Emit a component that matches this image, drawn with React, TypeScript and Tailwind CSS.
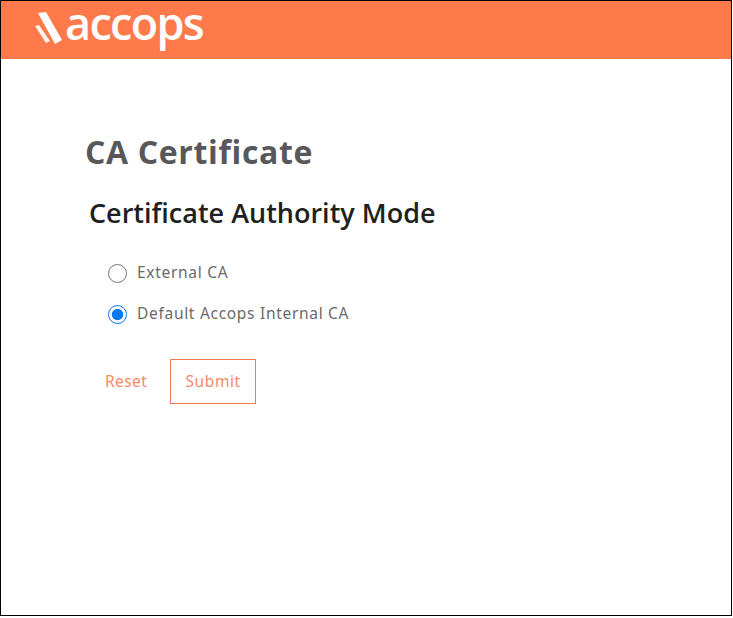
export default function App() {
  return (
    <div className="w-[733px] h-[618px] bg-white overflow-hidden">
      <div className="w-[732px] h-[616px] border border-black flex flex-col">
        <header className="h-[58px] bg-[#ff7a4a] flex items-start pl-[33px] shrink-0">
          <svg width="30" height="34" viewBox="0 0 30 34" className="mt-[11px] shrink-0">
            <polygon points="4,1 12,0 28,28 21,32" fill="#fff" />
            <polygon points="1,14 5,13 16,29 12,31" fill="#fff" opacity="0.9" />
          </svg>
          <span className="ml-[1px] text-[45px] leading-[44px] text-white font-['Open_Sans',sans-serif] font-semibold tracking-[-1.7px]">accops</span>
        </header>
        <main className="flex flex-col pl-[84px] pt-[71px] font-['Open_Sans',sans-serif]">
          <h1 className="text-[32px] leading-[44px] font-bold text-[#58585a] tracking-[0.65px]">CA Certificate</h1>
          <h2 className="mt-[20px] ml-[4px] text-[27px] leading-[37px] font-semibold text-[#221f20]">Certificate Authority Mode</h2>
          <div className="mt-[32px] ml-[23px] flex flex-col gap-[21px]">
            <label className="flex items-center gap-[10px] h-[20px] text-[15.5px] text-[#6a6a6a] tracking-[0.7px] font-['Noto_Sans',sans-serif]">
              <input type="radio" name="ca" className="w-[19px] h-[19px] m-0 accent-[#0a78f0]" />
              External CA
            </label>
            <label className="flex items-center gap-[10px] h-[20px] text-[15.5px] text-[#6a6a6a] tracking-[0.7px] font-['Noto_Sans',sans-serif]">
              <input type="radio" name="ca" defaultChecked className="w-[19px] h-[19px] m-0 accent-[#0a78f0]" />
              Default Accops Internal CA
            </label>
          </div>
          <div className="mt-[35px] ml-[20px] flex items-center gap-[23px] text-[15.5px] text-[#f58a6c] tracking-[0.4px] font-['Noto_Sans',sans-serif]">
            <button type="button">Reset</button>
            <button type="button" className="w-[86px] h-[45px] border border-[#f4795a] tracking-[0.6px]">Submit</button>
          </div>
        </main>
      </div>
    </div>
  );
}
